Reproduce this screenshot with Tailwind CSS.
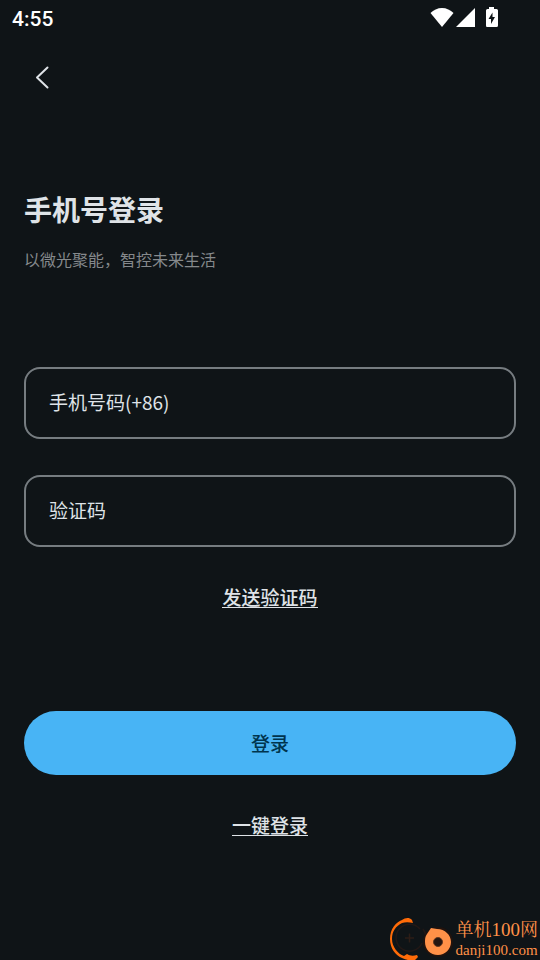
<!DOCTYPE html>
<html lang="zh-CN">
<head>
<meta charset="utf-8">
<meta name="viewport" content="width=device-width, initial-scale=1">
<title>手机号登录</title>
<script src="https://cdn.jsdelivr.net/npm/@tailwindcss/browser@4"></script>
</head>
<body class="relative flex min-h-screen flex-col overflow-x-hidden bg-[#0f1417] font-['Noto_Sans_CJK_SC',sans-serif] text-[#dfe3e7]">
  <header>
    <div class="flex h-9 items-center justify-between pl-3 pr-10 text-white">
      <time class="pt-0.5 font-[Roboto,sans-serif] text-[21px] leading-6 font-medium">4:55</time>
      <div class="flex items-start">
        <svg class="h-5 w-6" viewBox="0 0 24 20" fill="currentColor" aria-hidden="true"><path d="M12 19 .5 5C3.500 2 7.500 0 12 0s8.500 2 11.500 5z"/></svg>
        <svg class="ml-0.5 h-5 w-5" viewBox="0 0 20 20" fill="currentColor" aria-hidden="true"><path d="M0 19 19 0v19z"/></svg>
        <svg class="ml-2 h-5 w-4 overflow-visible" viewBox="0 0 16 20" fill="currentColor" aria-hidden="true"><path fill-rule="evenodd" d="M5 -1h5v2h2.500q1.500 0 1.500 1.500v15q0 1.500-1.500 1.500h-9.500Q2 19 2 17.500v-15Q2 1 3.500 1H5zM8.500 4.500 4.500 11H7v5l4-7H8.500z"/></svg>
      </div>
    </div>
    <nav class="px-6 pt-6">
      <button type="button" aria-label="返回" class="flex h-9 w-9 items-center justify-center">
        <svg class="h-6 w-6" viewBox="0 0 24 24" fill="none" stroke="currentColor" stroke-width="2" stroke-linecap="round" stroke-linejoin="round" aria-hidden="true"><path d="M17.500 1.500 7 11.500l10.500 10"/></svg>
      </button>
    </nav>
  </header>

  <main class="px-6 pt-[93px]">
    <h1 class="text-[28px] leading-10 font-bold">手机号登录</h1>
    <p class="mt-4 text-base leading-7 text-[#85898c]">以微光聚能，智控未来生活</p>

    <form class="mt-[94px] flex flex-col">
      <label class="flex h-[72px] items-center rounded-2xl border-2 border-[#767c80] px-[23px] text-[19px] leading-6">
        <span class="shrink-0 pb-0.5">手机号码(+86)</span>
        <input type="tel" class="h-full min-w-0 flex-1 bg-transparent pl-2 outline-none">
      </label>
      <label class="mt-9 flex h-[72px] items-center rounded-2xl border-2 border-[#767c80] px-[23px] text-[19px] leading-6">
        <span class="shrink-0 pb-0.5">验证码</span>
        <input type="text" inputmode="numeric" class="h-full min-w-0 flex-1 bg-transparent pl-2 outline-none">
      </label>
      <button type="button" class="mt-10 self-center border-b border-[#dfe3e7] text-[19px] leading-5 font-medium">发送验证码</button>
      <button type="submit" class="mt-[103px] h-16 w-full rounded-full bg-[#48b4f5] text-[19px] font-medium text-[#00344e]">登录</button>
    </form>
    <div class="mt-10 flex justify-center">
      <a href="#" class="border-b border-[#dfe3e7] text-[19px] leading-5 font-medium">一键登录</a>
    </div>
  </main>

  <aside class="absolute right-0 bottom-0 flex h-11 items-end text-[#ff9148]" aria-label="单机100网">
    <svg class="h-11 w-[67px] shrink-0" viewBox="0 0 67 44" fill="none" aria-hidden="true">
      <path d="M31 13a13.500 13.500 0 1 0 2 14" stroke="#221816" stroke-width="1.500"/>
      <path d="M34 13a15 15 0 0 1 1 16" stroke="#221816" stroke-width="1.500"/>
      <path d="M16 22h9M20.500 17.500v9" stroke="#2d1d17" stroke-width="1.500"/>
      <path d="M1 23C1 13 7 6 13 4 16 2 20 1 23 4L24 7C20 6 16 6 13 7 7 10 3 15 3 23c0 8 6 15 12 17l3-2c3 2 6 2 10 1l1 2-3 3c-5 1-8 0-13-2C6 39 1 32 1 23z" fill="#ff6b08"/>
      <circle cx="49" cy="26" r="15" fill="#21130e"/>
      <path d="M38 18 42 12l6 1c8 0 14 6 14 13 0 7-6 13-13 13-8 0-13-6-13-13 0-3 0-5 2-8z" fill="#ff9148"/>
      <circle cx="49" cy="26" r="4.500" fill="#241611" stroke="#633820"/>
    </svg>
    <div class="pr-0.5 font-['Noto_Serif_CJK_SC','Noto_Sans_CJK_SC',serif]">
      <div class="text-[18px] leading-5">单机<span class="font-['Liberation_Serif',serif] text-[19px]">100</span>网</div>
      <div class="font-['Liberation_Serif',serif] text-[15px] leading-5">danji100.com</div>
    </div>
  </aside>
</body>
</html>
